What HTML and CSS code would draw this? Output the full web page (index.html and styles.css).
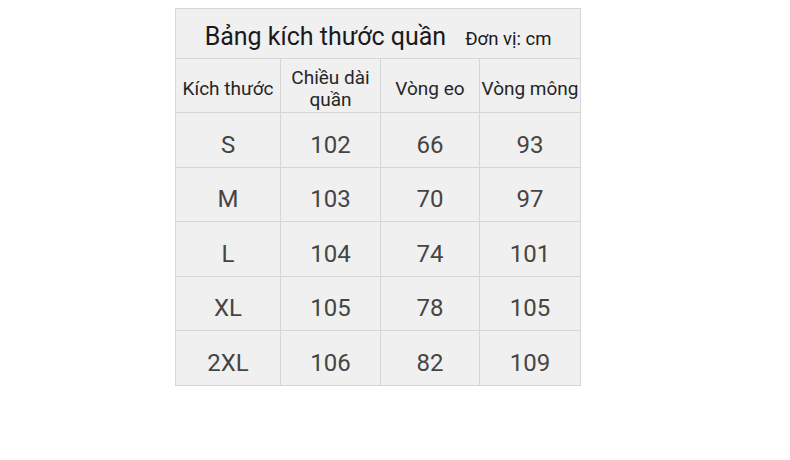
FILE: index.html
```html
<!DOCTYPE html>
<html lang="vi">
<head>
<meta charset="utf-8">
<link rel="stylesheet" href="styles.css">
</head>
<body>
<div class="page">
  <table class="size-table">
    <colgroup>
      <col class="c1"><col class="c2"><col class="c3"><col class="c4">
    </colgroup>
    <thead>
      <tr class="title-row">
        <th colspan="4"><span class="title">Bảng kích thước quần</span><span class="unit">Đơn vị: cm</span></th>
      </tr>
      <tr class="head-row">
        <th>Kích thước</th>
        <th>Chiều dài<br>quần</th>
        <th>Vòng eo</th>
        <th>Vòng mông</th>
      </tr>
    </thead>
    <tbody>
      <tr><td>S</td><td>102</td><td>66</td><td>93</td></tr>
      <tr><td>M</td><td>103</td><td>70</td><td>97</td></tr>
      <tr><td>L</td><td>104</td><td>74</td><td>101</td></tr>
      <tr><td>XL</td><td>105</td><td>78</td><td>105</td></tr>
      <tr><td>2XL</td><td>106</td><td>82</td><td>109</td></tr>
    </tbody>
  </table>
</div>
</body>
</html>
```
FILE: styles.css
```css
html, body {
  margin: 0;
  padding: 0;
  background: #ffffff;
}
.page {
  padding: 8px 0 0 175px;
  font-family: Roboto, "Noto Sans", sans-serif;
}
.size-table {
  border-collapse: collapse;
  background: #f0f0f0;
  table-layout: fixed;
  width: 405px;
}
.c1 { width: 105px; }
.c2 { width: 100px; }
.c3 { width: 99px; }
.c4 { width: 101px; }
.size-table th,
.size-table td {
  border: 1px solid #d6d6d6;
  text-align: center;
  padding: 0;
}
.title-row th {
  height: 44px;
  padding-top: 5px;
  font-weight: 400;
  color: #1a1a1a;
}
.title {
  font-size: 25px;
  margin-right: 19px;
}
.unit {
  font-size: 18.5px;
}
.head-row th {
  height: 47px;
  padding-top: 6px;
  font-weight: 400;
  font-size: 19px;
  line-height: 22px;
  color: #262626;
  white-space: nowrap;
}
.size-table td {
  height: 43.5px;
  padding-top: 10px;
  font-size: 24px;
  color: #454545;
}
```
